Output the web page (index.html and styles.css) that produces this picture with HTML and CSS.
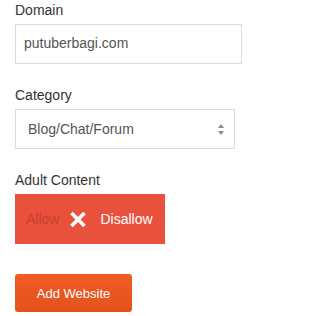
FILE: index.html
```html
<!DOCTYPE html>
<html>
<head>
<meta charset="utf-8">
<link rel="stylesheet" href="styles.css">
</head>
<body>
<form class="form">
  <div class="field">
    <label class="label" for="domain">Domain</label>
    <input class="input" id="domain" type="text" value="putuberbagi.com">
  </div>
  <div class="field">
    <label class="label" for="cat">Category</label>
    <div class="select-wrap">
      <select class="select" id="cat">
        <option>Blog/Chat/Forum</option>
      </select>
      <svg class="select-arrow" width="6" height="11" viewBox="0 0 6 11">
        <path d="M3 0 L6 4 L0 4 Z" fill="#8a8a8a"/>
        <path d="M0 7 L6 7 L3 11 Z" fill="#8a8a8a"/>
      </svg>
    </div>
  </div>
  <div class="field">
    <span class="label">Adult Content</span>
    <div class="toggle">
      <span class="toggle-off">Allow</span>
      <svg class="toggle-x" width="18" height="17" viewBox="0 0 18 17">
        <path d="M2.5 2 L15.5 15 M15.5 2 L2.5 15" stroke="#fff" stroke-width="3.6" stroke-linecap="butt"/>
      </svg>
      <span class="toggle-on">Disallow</span>
    </div>
  </div>
  <button class="btn" type="button">Add Website</button>
</form>
</body>
</html>
```
FILE: styles.css
```css
html, body {
  margin: 0;
  padding: 0;
  background: #fff;
}
body {
  font-family: "Liberation Sans", Arial, sans-serif;
  font-size: 14px;
  color: #333;
}
.form {
  padding-left: 15px;
  display: flex;
  flex-direction: column;
  align-items: flex-start;
}
.field {
  display: flex;
  flex-direction: column;
  align-items: flex-start;
  margin-bottom: 21px;
}
.field:last-of-type {
  margin-bottom: 0;
}
.label {
  display: block;
  line-height: 20px;
  margin-bottom: 4px;
  color: #333;
}
.input {
  box-sizing: border-box;
  width: 227px;
  height: 40px;
  border: 1px solid #dcdcdc;
  padding: 0 8px 3px 8px;
  margin: 0;
  font-family: "Liberation Sans", Arial, sans-serif;
  font-size: 14px;
  color: #555;
  outline: none;
  border-radius: 0;
}
.select-wrap {
  position: relative;
  width: 220px;
}
.select {
  -webkit-appearance: none;
  appearance: none;
  box-sizing: border-box;
  width: 220px;
  height: 40px;
  border: 1px solid #dcdcdc;
  border-radius: 0;
  background: #fff;
  padding: 0 12px;
  margin: 0;
  font-family: "Liberation Sans", Arial, sans-serif;
  font-size: 14px;
  color: #555;
  outline: none;
}
.select-arrow {
  position: absolute;
  right: 11px;
  top: 15px;
}
.toggle {
  box-sizing: border-box;
  width: 150px;
  height: 50px;
  background: #ea513c;
  display: flex;
  align-items: center;
  padding-left: 11px;
}
.toggle-off {
  color: #c63f2d;
}
.toggle-x {
  margin-left: 10px;
}
.toggle-on {
  color: #fff;
  margin-left: 13px;
}
.btn {
  margin-top: 30px;
  box-sizing: border-box;
  width: 117px;
  height: 38px;
  border: none;
  border-radius: 3px;
  background: linear-gradient(to bottom, #f25b25, #e4521c);
  color: #fff;
  font-family: "Liberation Sans", Arial, sans-serif;
  font-size: 13px;
  padding: 0;
}
```
